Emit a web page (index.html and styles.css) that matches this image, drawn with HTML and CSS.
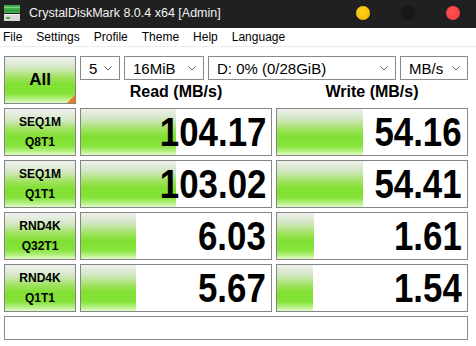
FILE: index.html
```
<!DOCTYPE html>
<html lang="en">
<head>
    <meta charset="UTF-8">
    <title>CrystalDiskMark 8.0.4 x64 [Admin]</title>
    <link rel="stylesheet" href="styles.css">
</head>
<body>
    <div class="titlebar">
        <svg class="app-icon" width="16" height="16" viewBox="0 0 16 16">
            <rect x="0" y="0" width="16" height="8" fill="#3fae49"/>
            <rect x="0" y="2" width="16" height="1" fill="#7fd48a"/>
            <rect x="0" y="5" width="16" height="1" fill="#2d8c37"/>
            <rect x="0" y="9" width="16" height="7" fill="#d9d9d9"/>
            <rect x="0" y="9" width="16" height="1" fill="#f2f2f2"/>
            <rect x="2" y="12" width="4" height="2" fill="#3fae49"/>
        </svg>
        <span class="title">CrystalDiskMark 8.0.4 x64 [Admin]</span>
        <div class="win-buttons">
            <span class="dot dot-min"></span>
            <span class="dot dot-max"></span>
            <span class="dot dot-close"></span>
        </div>
    </div>

    <div class="menubar">
        <span>File</span>
        <span>Settings</span>
        <span>Profile</span>
        <span>Theme</span>
        <span>Help</span>
        <span>Language</span>
    </div>

    <main class="panel">
        <div class="top">
            <div class="btn btn-all">All<span class="corner"></span></div>
            <div class="controls">
                <div class="combos">
                    <div class="combo combo-count">5<svg class="chevron" width="8" height="5" viewBox="0 0 8 5"><polyline points="0.5,0.5 4,4 7.5,0.5" fill="none" stroke="#606060"/></svg></div>
                    <div class="combo combo-size">16MiB<svg class="chevron" width="8" height="5" viewBox="0 0 8 5"><polyline points="0.5,0.5 4,4 7.5,0.5" fill="none" stroke="#606060"/></svg></div>
                    <div class="combo combo-drive">D: 0% (0/28GiB)<svg class="chevron" width="8" height="5" viewBox="0 0 8 5"><polyline points="0.5,0.5 4,4 7.5,0.5" fill="none" stroke="#606060"/></svg></div>
                    <div class="combo combo-unit">MB/s<svg class="chevron" width="8" height="5" viewBox="0 0 8 5"><polyline points="0.5,0.5 4,4 7.5,0.5" fill="none" stroke="#606060"/></svg></div>
                </div>
                <div class="headers">
                    <div>Read (MB/s)</div>
                    <div>Write (MB/s)</div>
                </div>
            </div>
        </div>

        <div class="row">
            <div class="btn btn-test">SEQ1M<br>Q8T1</div>
            <div class="cell" style="background-size: 95px 100%"><span class="value">104.17</span></div>
            <div class="cell" style="background-size: 86px 100%"><span class="value">54.16</span></div>
        </div>
        <div class="row">
            <div class="btn btn-test">SEQ1M<br>Q1T1</div>
            <div class="cell" style="background-size: 95px 100%"><span class="value">103.02</span></div>
            <div class="cell" style="background-size: 86px 100%"><span class="value">54.41</span></div>
        </div>
        <div class="row">
            <div class="btn btn-test">RND4K<br>Q32T1</div>
            <div class="cell" style="background-size: 55px 100%"><span class="value">6.03</span></div>
            <div class="cell" style="background-size: 37px 100%"><span class="value">1.61</span></div>
        </div>
        <div class="row">
            <div class="btn btn-test">RND4K<br>Q1T1</div>
            <div class="cell" style="background-size: 55px 100%"><span class="value">5.67</span></div>
            <div class="cell" style="background-size: 36px 100%"><span class="value">1.54</span></div>
        </div>

        <div class="status"></div>
    </main>
</body>
</html>
```

FILE: styles.css
```
body {
    margin: 0;
    padding: 0;
    background-color: #ffffff;
    font-family: "Liberation Sans", Arial, sans-serif;
    color: #000000;
}
.titlebar {
    display: flex;
    align-items: center;
    height: 28px;
    padding: 0 0 2px 4px;
    box-sizing: border-box;
    background-color: #202020;
    color: #f2f2f2;
}
.app-icon {
    margin-right: 9px;
}
.title {
    font-size: 12.5px;
}
.win-buttons {
    display: flex;
    gap: 31px;
    margin-left: auto;
    padding-right: 16px;
}
.dot {
    width: 14px;
    height: 14px;
    border-radius: 50%;
}
.dot-min {
    background: radial-gradient(circle at 40% 40%, #ffd21a, #f2b400);
}
.dot-max {
    background-color: #171717;
}
.dot-close {
    background: radial-gradient(circle at 40% 40%, #ff5050, #f53a3a);
}
.menubar {
    display: flex;
    gap: 14px;
    height: 18px;
    padding-left: 3px;
    align-items: center;
    font-size: 12px;
    border-bottom: 1px solid #ececec;
}
.panel {
    padding: 9px 0 0 4px;
}
.top {
    display: flex;
    gap: 4px;
}
.btn {
    box-sizing: border-box;
    border: 1px solid #858585;
    background: linear-gradient(to bottom, #f0f1ef 0%, #d6e8c8 22%, #9ee25c 45%, #80e032 60%, #86e33a 80%, #b6f084 92%, #e2fccc 100%);
    display: flex;
    align-items: center;
    justify-content: center;
    text-align: center;
    font-weight: bold;
}
.btn-all {
    position: relative;
    width: 72px;
    height: 48px;
    font-size: 17px;
}
.corner {
    position: absolute;
    right: 0;
    bottom: 0;
    width: 0;
    height: 0;
    border-left: 8px solid transparent;
    border-bottom: 8px solid #f07a1e;
}
.controls {
    width: 388px;
}
.combos {
    display: flex;
    gap: 4px;
    height: 24px;
}
.combo {
    box-sizing: border-box;
    display: flex;
    align-items: center;
    justify-content: space-between;
    height: 24px;
    padding: 0 7px 0 8px;
    border: 1px solid #8a8a8a;
    font-size: 15px;
}
.combo-count {
    width: 40px;
}
.combo-size {
    width: 80px;
}
.combo-drive {
    width: 188px;
}
.combo-unit {
    width: 68px;
}
.headers {
    display: grid;
    grid-template-columns: 192px 192px;
    column-gap: 4px;
    height: 24px;
    align-items: center;
    text-align: center;
    font-size: 16px;
    font-weight: bold;
}
.row {
    display: grid;
    grid-template-columns: 72px 192px 192px;
    column-gap: 4px;
    margin-top: 4px;
    height: 48px;
}
.btn-test {
    font-size: 12px;
    line-height: 20px;
}
.cell {
    box-sizing: border-box;
    display: flex;
    align-items: center;
    justify-content: flex-end;
    padding-right: 5px;
    border: 1px solid #858585;
    background-color: #ffffff;
    background-image: linear-gradient(to bottom, #eef0ec 0%, #d2e6c2 22%, #9ee25c 45%, #80e032 60%, #86e33a 80%, #b6f084 92%, #e2fccc 100%);
    background-repeat: no-repeat;
}
.value {
    display: inline-block;
    font-size: 41px;
    font-weight: bold;
    line-height: 1;
    transform: scaleX(0.85);
    transform-origin: right center;
}
.status {
    box-sizing: border-box;
    width: 464px;
    height: 24px;
    margin-top: 4px;
    border: 1px solid #858585;
}
```
